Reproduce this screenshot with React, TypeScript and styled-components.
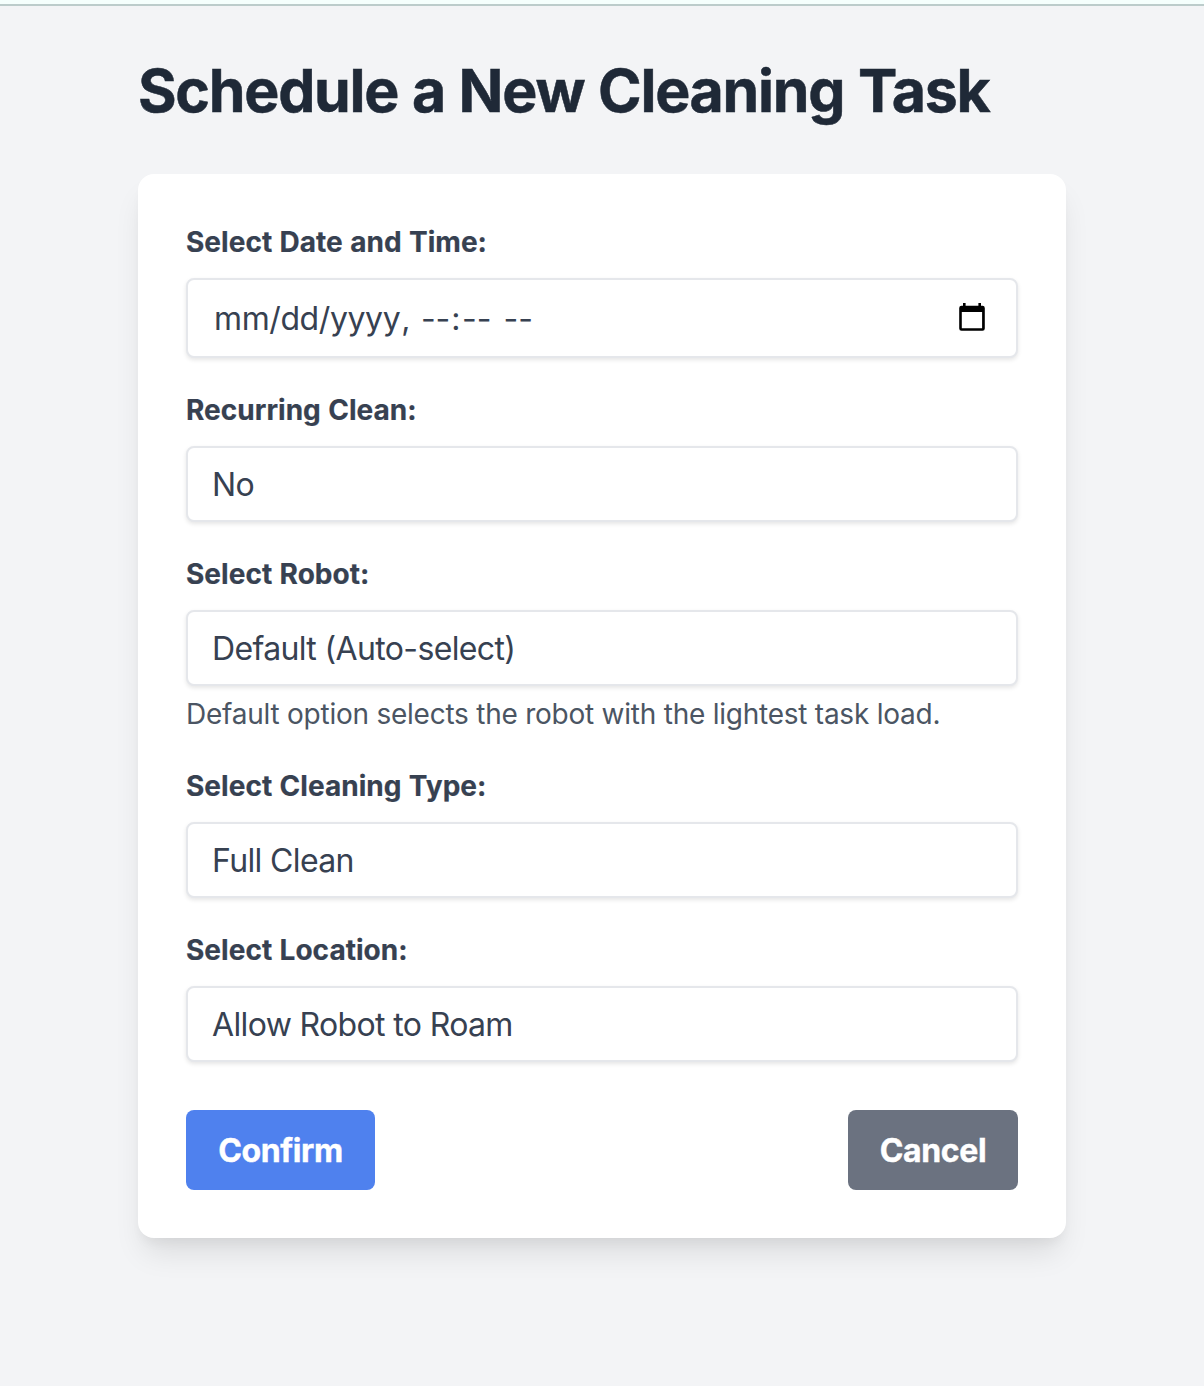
import React from "react";
import styled, { createGlobalStyle } from "styled-components";

const GlobalStyle = createGlobalStyle`
  *, *::before, *::after { box-sizing: border-box; }
  body {
    margin: 0;
    background: #f3f4f6;
    font-family: Inter, "Liberation Sans", sans-serif;
    color: #374151;
  }
`;

const Page = styled.div`
  min-height: 1386px;
  background: #f3f4f6;
`;

const TopBar = styled.header`
  height: 6px;
  background: #f5fffd;
  border-bottom: 2px solid #bccccb;
`;

const Content = styled.main`
  width: 928px;
  margin: 0 auto;
  padding-top: 45px;
`;

const Title = styled.h1`
  margin: 0 0 43px;
  font-size: 59px;
  line-height: 80px;
  font-weight: 700;
  letter-spacing: -1.260px;
  word-spacing: 1px;
  -webkit-text-stroke: 0.500px #1f2937;
  color: #1f2937;
  white-space: nowrap;
`;

const Card = styled.form`
  height: 1064px;
  padding: 48px;
  border-radius: 16px;
  background: #fff;
  box-shadow: 0 20px 30px -6px rgba(0, 0, 0, 0.1), 0 8px 12px -4px rgba(0, 0, 0, 0.05);
`;

const Field = styled.div`
  margin-bottom: 32px;
`;

const Label = styled.label`
  display: block;
  margin-bottom: 16px;
  font-size: 28px;
  line-height: 40px;
  font-weight: 700;
  letter-spacing: 0.030px;
  word-spacing: 0.700px;
  -webkit-text-stroke: 0.200px #374151;
  white-space: nowrap;
`;

const Control = styled.div<{ $tall?: boolean }>`
  display: flex;
  align-items: center;
  justify-content: space-between;
  height: ${(p) => (p.$tall ? 80 : 76)}px;
  padding: ${(p) => (p.$tall ? "0 31px 0 26px" : "0 24px")};
  border: 2px solid #e5e7eb;
  border-radius: 8px;
  background: #fff;
  box-shadow: 0 2px 4px rgba(0, 0, 0, 0.1);
`;

const Value = styled.span`
  padding-top: 2px;
  font-size: 32px;
  line-height: 40px;
  letter-spacing: -0.640px;
  white-space: pre;
`;

const DateValue = styled(Value)`
  display: flex;
  letter-spacing: -0.400px;
`;

const DatePart = styled.span<{ $before?: number }>`
  margin-left: ${(p) => p.$before ?? 0}px;
`;

const TimePart = styled(DatePart)`
  letter-spacing: 0;
`;

const Hint = styled.p`
  margin: 8px 0 0;
  font-size: 28px;
  line-height: 40px;
  color: #4b5563;
  letter-spacing: -0.240px;
  white-space: nowrap;
`;

const Actions = styled.div`
  display: flex;
  justify-content: space-between;
  margin-top: 48px;
`;

const Button = styled.button<{ $bg: string; $width: number }>`
  width: ${(p) => p.$width}px;
  height: 80px;
  padding: 2px 0 0;
  border: 0;
  border-radius: 8px;
  background: ${(p) => p.$bg};
  color: #fff;
  font: 700 32px/48px Inter, "Liberation Sans", sans-serif;
  letter-spacing: -0.400px;
  -webkit-text-stroke: 0.400px #fff;
`;

const CalendarIcon = styled.svg`
  display: block;
  width: 26px;
  height: 28px;
  margin-bottom: 2px;
`;

const rows = [
  { label: "Recurring Clean:", value: "No" },
  {
    label: "Select Robot:",
    value: "Default (Auto-select)",
    hint: "Default option selects the robot with the lightest task load.",
  },
  { label: "Select Cleaning Type:", value: "Full Clean" },
  { label: "Select Location:", value: "Allow Robot to Roam" },
];

export default function App() {
  return (
    <>
      <GlobalStyle />
      <Page>
        <TopBar />
        <Content>
          <Title>Schedule a New Cleaning Task</Title>
          <Card>
            <Field>
              <Label>Select Date and Time:</Label>
              <Control $tall>
                <DateValue>
                  <DatePart>mm/dd/yyyy</DatePart>
                  <DatePart $before={1}>,</DatePart>
                  <TimePart $before={10.8}>--</TimePart>
                  <TimePart $before={1}>:</TimePart>
                  <TimePart $before={1.5}>--</TimePart>
                  <TimePart $before={12}>--</TimePart>
                </DateValue>
                <CalendarIcon viewBox="0 0 26 28" aria-hidden="true">
                  <path
                    fill="#000"
                    fillRule="evenodd"
                    d="M4 0h2.600v2.800h12.800V0H22v2.800h1.500A2.300 2.300 0 0 1 25.800 5v20.500a2.300 2.300 0 0 1-2.300 2.300h-21A2.300 2.300 0 0 1 .2 25.500V5a2.300 2.300 0 0 1 2.300-2.200H4zM2.800 9v16.200h20.300V9z"
                  />
                </CalendarIcon>
              </Control>
            </Field>
            {rows.map((r) => (
              <Field key={r.label}>
                <Label>{r.label}</Label>
                <Control>
                  <Value>{r.value}</Value>
                </Control>
                {r.hint && <Hint>{r.hint}</Hint>}
              </Field>
            ))}
            <Actions>
              <Button type="button" $bg="#4f81ee" $width={189}>Confirm</Button>
              <Button type="button" $bg="#6b7280" $width={170}>Cancel</Button>
            </Actions>
          </Card>
        </Content>
      </Page>
    </>
  );
}
